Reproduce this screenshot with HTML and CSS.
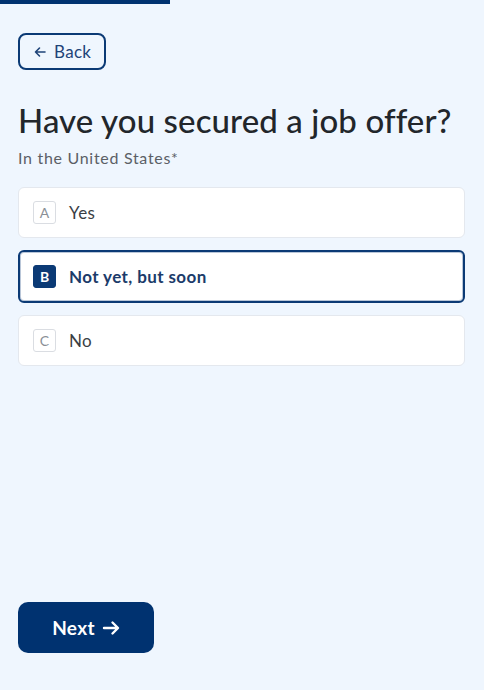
FILE: index.html
```html
<!DOCTYPE html>
<html>
<head>
<meta charset="utf-8">
<link rel="stylesheet" href="styles.css">
</head>
<body>
<div class="page">
  <div class="progress"><div class="progress-fill" style="width:170px"></div></div>
  <div class="content">
    <button class="back">
      <svg width="14" height="14" viewBox="0 0 14 14" fill="none" stroke="currentColor" stroke-width="1.6" stroke-linecap="round" stroke-linejoin="round"><path d="M12 7H2.5M6.5 3L2.5 7l4 4"/></svg>
      <span>Back</span>
    </button>
    <h1 class="title">Have you secured a job offer?</h1>
    <p class="subtitle">In the United States*</p>
    <div class="options">
      <div class="option"><span class="key">A</span><span class="label">Yes</span></div>
      <div class="option selected"><span class="key">B</span><span class="label">Not yet, but soon</span></div>
      <div class="option"><span class="key">C</span><span class="label">No</span></div>
    </div>
    <div class="spacer"></div>
    <button class="next">
      <span>Next</span>
      <svg width="18" height="18" viewBox="0 0 18 18" fill="none" stroke="currentColor" stroke-width="2.4" stroke-linecap="round" stroke-linejoin="round"><path d="M2 9h13.5M10.5 3.5L16 9l-5.5 5.5"/></svg>
    </button>
  </div>
</div>
</body>
</html>
```
FILE: styles.css
```css
* { box-sizing: border-box; }
html, body { margin: 0; padding: 0; }
body {
  background: #eff6fe;
  font-family: Lato, "Open Sans", sans-serif;
  color: #1f2328;
}
.page {
  height: 690px;
  display: flex;
  flex-direction: column;
}
.progress { height: 4px; }
.progress-fill { height: 4px; background: #003270; }
.content {
  flex: 1;
  display: flex;
  flex-direction: column;
  align-items: flex-start;
  padding: 29px 19px 37px 18px;
}
.back {
  display: flex;
  align-items: center;
  gap: 7px;
  height: 37px;
  padding: 0 13px 0 13px;
  border: 2px solid #0b3a75;
  border-radius: 8px;
  background: transparent;
  color: #1e4378;
  font-family: inherit;
  font-size: 17px;
  letter-spacing: 0.3px;
}
.title {
  margin: 30px 0 0 0;
  font-size: 33px;
  font-weight: 500;
  line-height: 40px;
  color: #22262b;
  letter-spacing: 0.1px;
}
.subtitle {
  margin: 8px 0 0 0;
  font-size: 16px;
  line-height: 20px;
  color: #5b5f66;
  letter-spacing: 0.7px;
}
.options {
  align-self: stretch;
  display: flex;
  flex-direction: column;
  gap: 13px;
  margin-top: 19px;
}
.option {
  display: flex;
  align-items: center;
  height: 51px;
  padding: 0 14px;
  background: #fff;
  border: 1px solid #e4e8ee;
  border-radius: 6px;
}
.option.selected {
  height: 53px;
  margin: -1px 0;
  border: 2px solid #0b3a75;
  box-shadow: inset 0 0 0 1px #b9c6d8;
  border-radius: 6px;
  padding: 0 13px;
}
.key {
  width: 23px;
  height: 23px;
  display: flex;
  align-items: center;
  justify-content: center;
  border: 1px solid #dadde2;
  border-radius: 3px;
  font-size: 14px;
  color: #8a8f96;
  margin-right: 13px;
}
.selected .key {
  background: #0b3a75;
  border-color: #0b3a75;
  color: #fff;
  font-weight: 700;
}
.label {
  font-size: 17px;
  color: #3a3e44;
  letter-spacing: 0.4px;
}
.selected .label {
  color: #1b3b6a;
  font-weight: 700;
}
.spacer { flex: 1; }
.next {
  display: flex;
  align-items: center;
  justify-content: center;
  gap: 7px;
  width: 136px;
  height: 51px;
  border: none;
  border-radius: 10px;
  background: #003270;
  color: #fff;
  font-family: inherit;
  font-size: 19px;
  font-weight: 700;
  letter-spacing: 0.3px;
}
```
